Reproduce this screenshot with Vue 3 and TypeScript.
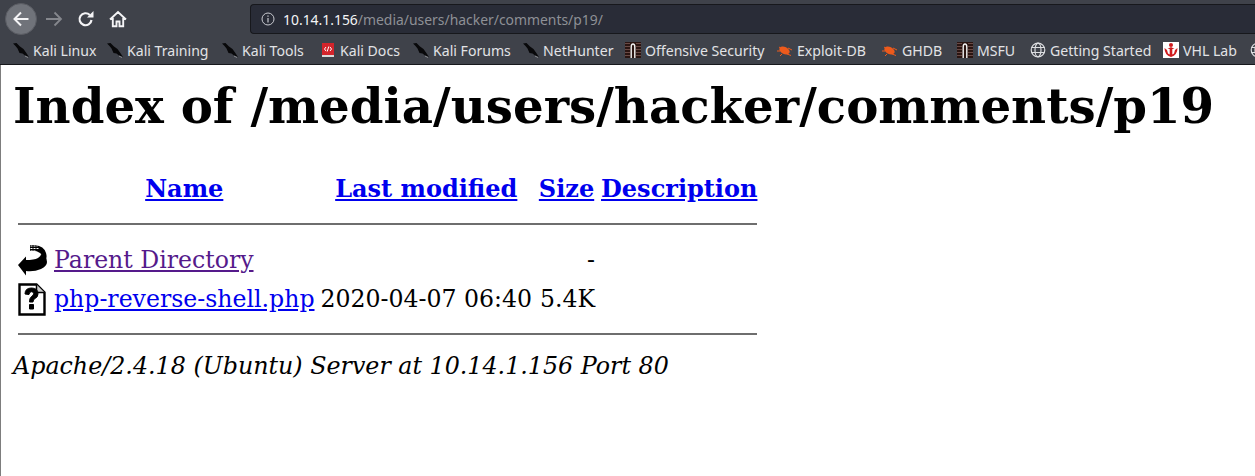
<script setup lang="ts">
interface Mark { label: string; kind: string; w: number }
const marks: Mark[] = [
  { label: 'Kali Linux', kind: 'kali', w: 94 },
  { label: 'Kali Training', kind: 'kali', w: 115 },
  { label: 'Kali Tools', kind: 'kali', w: 98 },
  { label: 'Kali Docs', kind: 'doc', w: 93 },
  { label: 'Kali Forums', kind: 'kali', w: 110 },
  { label: 'NetHunter', kind: 'kali', w: 102 },
  { label: 'Offensive Security', kind: 'off', w: 152 },
  { label: 'Exploit-DB', kind: 'bug', w: 105 },
  { label: 'GHDB', kind: 'bug', w: 75 },
  { label: 'MSFU', kind: 'off', w: 73 },
  { label: 'Getting Started', kind: 'globe', w: 133 },
  { label: 'VHL Lab', kind: 'vhl', w: 87 },
  { label: '', kind: 'globe', w: 20 }
]
</script>

<template>
  <div class="page">
    <header class="chrome">
      <div class="toolbar">
        <button class="nav back" aria-label="Back">
          <svg width="20" height="20" viewBox="0 0 20 20"><path d="M17.500 10H4M10 3.500 3.500 10l6.500 6.500" fill="none" stroke="#f4f4f6" stroke-width="2"/></svg>
        </button>
        <span class="nav fwd"><svg width="20" height="20" viewBox="0 0 20 20"><path d="M2 10h15M10.500 3.500 17 10l-6.500 6.500" fill="none" stroke="#85878d" stroke-width="1.800"/></svg></span>
        <span class="nav reload"><svg width="18" height="18" viewBox="0 0 18 18"><path d="M14.500 10A6 6 0 1 1 12.800 5" fill="none" stroke="#f4f4f6" stroke-width="2.200"/><path d="M10 7.500h6.500V1z" fill="#f4f4f6"/></svg></span>
        <span class="nav home"><svg width="18" height="18" viewBox="0 0 18 18"><path d="M1 9.500 9 2l8 7.500M3.800 8v8.200h3.700v-4.700h3v4.700h3.700V8" fill="none" stroke="#f4f4f6" stroke-width="1.900"/></svg></span>
        <div class="url">
          <svg class="info" width="14" height="14" viewBox="0 0 14 14"><circle cx="7" cy="7" r="6" fill="none" stroke="#c9cad0"/><path d="M7 6v4.500M7 3.500v1.300" stroke="#c9cad0" stroke-width="1.200"/></svg>
          <span class="host">10.14.1.156</span><span class="path">/media/users/hacker/comments/p19/</span>
        </div>
      </div>
      <nav class="bookmarks">
        <a v-for="m in marks" :key="m.label + m.w" class="mark" :style="{ width: m.w + 'px' }">
          <svg v-if="m.kind === 'kali'" width="16" height="16" viewBox="0 0 16 16"><path d="M0 1.500 3.500 1 7 4.500l3.500 2.500 2.500 3.500 3 4.500-4-1.500-2.500-2L6.500 11 4.500 6.500 2.500 4z" fill="#08080a"/><path d="M12 14l3 1.500" stroke="#d8d8dc" stroke-width=".5"/></svg>
          <svg v-else-if="m.kind === 'doc'" width="16" height="16" viewBox="0 0 16 16"><rect x="2" y="1" width="12" height="13" fill="#d3242b"/><rect x="2" y="13" width="12" height="2" fill="#d9d9d9"/><path d="M6 5 4.500 7 6 9M10 5l1.500 2L10 9M8.800 4.500 7.200 9.500" stroke="#fff" fill="none"/></svg>
          <svg v-else-if="m.kind === 'off'" width="16" height="16" viewBox="0 0 16 16"><rect width="16" height="16" fill="#2a1512"/><path d="M0 1.500h5M0 4.500h5M0 7.500h5M0 10.500h5M0 13.500h5M11 1.500h5M11 4.500h5M11 7.500h5M11 10.500h5M11 13.500h5" stroke="#6b4a45"/><path d="M6.200 16V5q0-3 1.800-3t1.800 3v11" fill="none" stroke="#f2f2f2" stroke-width="1.400"/></svg>
          <svg v-else-if="m.kind === 'bug'" width="16" height="16" viewBox="0 0 16 16"><ellipse cx="7.500" cy="8.500" rx="5.500" ry="3.500" transform="rotate(25 7.500 8.500)" fill="#ed5a1c"/><path d="M2 5l3 2M0 9h3M10 12l4 1.500M11 6l4 2M5 12l-2 2" stroke="#ed5a1c"/></svg>
          <svg v-else-if="m.kind === 'globe'" width="16" height="16" viewBox="0 0 16 16"><g fill="none" stroke="#dcdde0" stroke-width="1.200"><circle cx="8" cy="8" r="6.800"/><ellipse cx="8" cy="8" rx="3" ry="6.800"/><path d="M1.500 5.500h13M1.500 10.500h13"/></g></svg>
          <svg v-else width="16" height="16" viewBox="0 0 16 16"><rect width="16" height="16" fill="#fff"/><path d="M1.500 6q0 7 6.500 9 6.500-2 6.500-9l-2.500 2-1 3.500-1.700 1V7h2.200L8 5 4.500 7h2.200v5.500L5 11.500 4 8z" fill="#cf1c1f"/><circle cx="8" cy="3" r="2" fill="#cf1c1f"/></svg>
          <span v-if="m.label">{{ m.label }}</span>
        </a>
      </nav>
    </header>
    <main class="doc">
      <h1>Index of /media/users/hacker/comments/p19</h1>
      <table>
        <tbody>
          <tr>
            <th class="blank"></th>
            <th><a href="#">Name</a></th>
            <th><a href="#">Last modified</a></th>
            <th class="size"><a href="#">Size</a></th>
            <th><a href="#">Description</a></th>
          </tr>
          <tr><th colspan="5" class="rule"><hr class="hr-top" /></th></tr>
          <tr>
            <td class="ico first">
              <svg width="30" height="33" viewBox="0 0 30 33"><g transform="translate(0 1)"><path d="M0 21 8 12.500V16q8 0 12-2 3-1.500 3-4 6 2 6 8 0 4-6 7-7 3-15 2v4.500z" fill="#000"/><path d="M12 1h5q9 1 11 8t-3 9q2-5-3-9-4-3-10-2z" fill="#000"/><path d="M12.500 2h7M12.500 4.500h8M12.500 7h6" stroke="#fff" stroke-width="1" stroke-dasharray="2 1"/></g></svg>
            </td>
            <td><a class="visited" href="#">Parent Directory</a></td>
            <td></td>
            <td class="right">-</td>
            <td></td>
          </tr>
          <tr>
            <td class="ico">
              <svg width="30" height="33" viewBox="0 0 30 33"><path d="M1.500 1.500h17l8 8v22h-25z" fill="#fff" stroke="#000" stroke-width="2.400"/><path d="M18.500 1.500v8h8" fill="#ccc" stroke="#000" stroke-width="1.500"/><path d="M7 11q0-6 6.500-6T20 11q0 3-3 4.500-2 1-2 3.500h-3.500q0-4 2-5.500 2.200-1.300 2.200-2.800 0-2-2.200-2T11 11.500zM11.500 21.500H15.500v4.500h-4z" fill="#000" stroke="#000" stroke-width="1"/></svg>
            </td>
            <td><a href="#">php-reverse-shell.php</a></td>
            <td>2020-04-07 06:40</td>
            <td class="right">5.4K</td>
            <td></td>
          </tr>
          <tr><th colspan="5" class="rule"><hr class="hr-bottom" /></th></tr>
        </tbody>
      </table>
      <address>Apache/2.4.18 (Ubuntu) Server at 10.14.1.156 Port 80</address>
    </main>
  </div>
</template>

<style>
html, body { margin: 0; background: #fff; overflow: hidden; }
</style>

<style scoped>
.page { width: 1255px; height: 476px; overflow: hidden; display: flex; flex-direction: column; }
.chrome { background: #3f424a; height: 65px; flex: none; border-bottom: 1px solid #17181c; box-sizing: border-box; }
.toolbar { height: 38px; display: flex; align-items: center; padding-left: 5px; }
.nav { display: flex; align-items: center; justify-content: center; padding: 0; border: 0; background: none; }
.back { width: 32px; height: 32px; border-radius: 50%; background: #70737a; border: 1px solid #5a5c63; box-sizing: border-box; }
.fwd { width: 33px; }
.reload { width: 32px; }
.home { width: 32px; }
.url { margin-left: 116px; flex: 1; height: 30px; background: #292c37; border: 1px solid #17181c; border-right: 0; border-radius: 4px 0 0 4px; box-sizing: border-box; display: flex; align-items: center; padding-left: 10px; font: 13.92px "Noto Sans", sans-serif; }
.info { margin-right: 8px; }
.host { color: #f4f4f6; }
.path { color: #8e9096; }
.bookmarks { height: 26px; display: flex; align-items: center; padding: 0 0 2px 13px; box-sizing: border-box; font: 14.1px "Noto Sans", sans-serif; color: #e2e3e6; white-space: nowrap; }
.mark { display: flex; align-items: center; gap: 4px; flex: none; text-decoration: none; color: inherit; }
.doc { flex: 1; border-left: 1px solid #7d7d7d; padding: 0 11px; font: 23.7px "DejaVu Serif", serif; color: #000; }
h1 { font-size: 48.25px; font-weight: 700; margin: 13px 0 38px 1px; line-height: 56px; white-space: nowrap; }
table { border-spacing: 6px 2px; font-size: 23.6px; }
th { font-weight: 700; font-size: 24px; padding: 1px 0; line-height: 28px; }
td { padding: 1px 0; line-height: 28px; }
.size { width: 57px; }
.ico { height: 38px; width: 30px; padding: 0; }
.ico.first { height: 37px; }
.ico svg { display: block; }
.right { text-align: right; }
.rule { padding: 0; }
hr { border: 0; border-top: 2px solid #6e6e6e; }
.hr-top { margin: 17px 0 14px; }
.hr-bottom { margin: 13px 0 15px; }
a { color: #0000ee; text-decoration: underline; }
a.visited { color: #551a8b; }
address { font-style: italic; line-height: 28px; margin-left: 1px; font-size: 23.78px; }
</style>
